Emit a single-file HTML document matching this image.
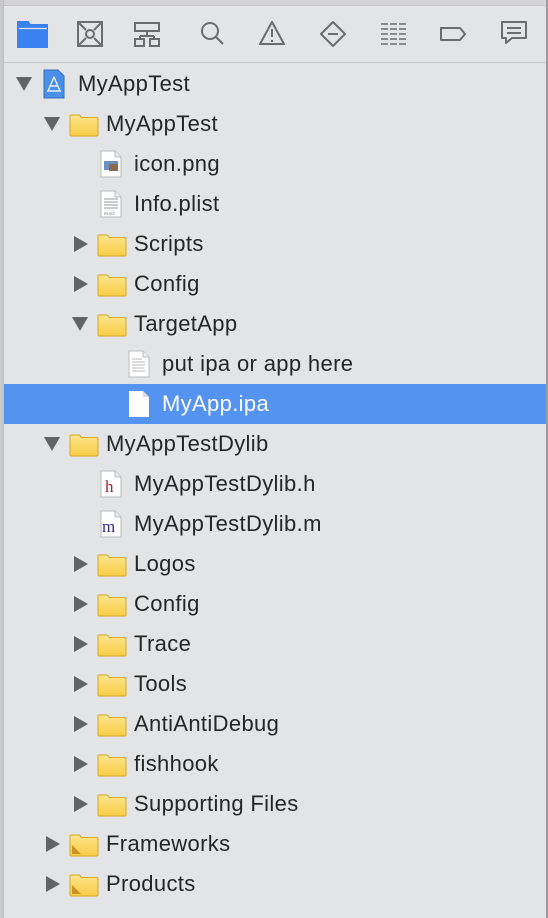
<!DOCTYPE html>
<html><head><style>
body{margin:0;width:548px;height:918px;background:#e3e4e6;position:relative;overflow:hidden;font-family:"Liberation Sans",sans-serif;}
.abs{position:absolute}
.t{position:absolute;top:8px;font-size:22px;letter-spacing:0.35px;color:#262626;line-height:26px;white-space:nowrap}
</style></head><body>
<div class="abs" style="left:0;top:0;width:548px;height:5px;background:#d4d4d6;border-bottom:1px solid #c4c4c6"></div>
<div class="abs" style="left:0;top:0;width:3px;height:918px;background:#c9c9cb"></div>
<div class="abs" style="left:3px;top:0;width:1px;height:918px;background:#bdbdbf"></div>
<div class="abs" style="right:0;top:0;width:2px;height:918px;background:#9c9c9e"></div>
<div class="abs" style="left:4px;top:62px;width:542px;height:1px;background:#c8c8ca"></div>
<!-- toolbar -->
<svg class="abs" style="left:0;top:0" width="548" height="62" viewBox="0 0 548 62" fill="none" stroke="#6c6c6c" stroke-width="2">
<path d="M18 22h10l2 3h17v22H18z" fill="#3b82f0" stroke="#3b82f0"/>
<path d="M19 28.5h28" stroke="#e3e4e6" stroke-width="1.2"/>
<rect x="78" y="22" width="24" height="24"/><path d="M78 22l8 8M102 22l-8 8M78 46l8-8M102 46l-8-8"/><circle cx="90" cy="34" r="4"/>
<rect x="135" y="23" width="24" height="8"/><path d="M147 31v5M140 36h14M140 36v3M154 36v3"/><rect x="135" y="39" width="9" height="7"/><rect x="150" y="39" width="9" height="7"/>
<circle cx="210" cy="31" r="8"/><path d="M216 37l7 7"/>
<path d="M272 22l12 22h-24z" stroke-linejoin="round"/><path d="M272 29v8M272 40v2"/>
<path d="M333 22l12 12-12 12-12-12z" stroke-linejoin="round"/><path d="M328 34h10"/>
<path d="M381 24h26M381 29h26M381 34h26M381 39h26M381 44h26" stroke-width="1.6" stroke-dasharray="7 2"/>
<path d="M441 28h19l5 6-5 6h-19z" stroke-linejoin="round"/>
<path d="M502 22h24v16h-14l-6 5v-5h-4z" stroke-linejoin="round"/><path d="M507 28h14M507 33h14"/>
</svg>
<div class="abs" style="left:4px;top:384px;width:542px;height:40px;background:#5593f0"></div>
<svg width="0" height="0" style="position:absolute">
<defs>
<linearGradient id="fg" x1="0" y1="0" x2="0" y2="1"><stop offset="0" stop-color="#fde58a"/><stop offset="1" stop-color="#f8cc45"/></linearGradient>
<symbol id="fold" viewBox="0 0 30 24"><path d="M1 3.5a1.5 1.5 0 0 1 1.5-1.5h8l2 2.5h15a1.5 1.5 0 0 1 1.5 1.5v15.5a1.5 1.5 0 0 1-1.5 1.5h-25a1.5 1.5 0 0 1-1.5-1.5z" fill="url(#fg)" stroke="#d8a92a"/></symbol>
<symbol id="foldp" viewBox="0 0 30 24"><use href="#fold"/><path d="M3 21V12l9 9z" fill="#c99425"/></symbol>
<symbol id="file" viewBox="0 0 22 28"><path d="M1 1h14l6 6v20H1z" fill="#fff" stroke="#bbb"/><path d="M15 1v6h6" fill="#eee" stroke="#bbb"/></symbol>
<symbol id="down" viewBox="0 0 16 14"><path d="M0 0h16L8 14z" fill="#636363"/></symbol>
<symbol id="right" viewBox="0 0 14 16"><path d="M0 0l14 8L0 16z" fill="#636363"/></symbol>
</defs></svg>

<svg class="abs" style="left:16px;top:77px" width="16" height="14"><use href="#down"/></svg>
<svg class="abs" style="left:43px;top:69px" width="22" height="30" viewBox="0 0 22 30"><path d="M1 1h14l6 6v22H1z" fill="#4a90e8" stroke="#2f6fc4"/><path d="M11 8l-6 14M11 8l6 14M7 17h8M4 22h14" stroke="#fff" stroke-width="1.2" fill="none"/></svg>
<div class="t" style="left:78px;top:71px">MyAppTest</div>
<svg class="abs" style="left:44px;top:117px" width="16" height="14"><use href="#down"/></svg>
<svg class="abs" style="left:69px;top:113px" width="30" height="24"><use href="#fold"/></svg>
<div class="t" style="left:106px;top:111px">MyAppTest</div>
<svg class="abs" style="left:100px;top:150px" width="22" height="28"><use href="#file"/><rect x="4" y="11" width="14" height="9" fill="#6a8fc0"/><rect x="9" y="14" width="9" height="7" fill="#8a6a4a"/></svg>
<div class="t" style="left:134px;top:151px">icon.png</div>
<svg class="abs" style="left:100px;top:190px" width="22" height="28"><use href="#file"/><path d="M4 9h14M4 12h14M4 15h14M4 18h14" stroke="#999"/><text x="4" y="25" font-size="4" fill="#666" font-family="Liberation Sans">PLIST</text></svg>
<div class="t" style="left:134px;top:191px">Info.plist</div>
<svg class="abs" style="left:74px;top:236px" width="14" height="16"><use href="#right"/></svg>
<svg class="abs" style="left:97px;top:233px" width="30" height="24"><use href="#fold"/></svg>
<div class="t" style="left:134px;top:231px">Scripts</div>
<svg class="abs" style="left:74px;top:276px" width="14" height="16"><use href="#right"/></svg>
<svg class="abs" style="left:97px;top:273px" width="30" height="24"><use href="#fold"/></svg>
<div class="t" style="left:134px;top:271px">Config</div>
<svg class="abs" style="left:72px;top:317px" width="16" height="14"><use href="#down"/></svg>
<svg class="abs" style="left:97px;top:313px" width="30" height="24"><use href="#fold"/></svg>
<div class="t" style="left:134px;top:311px">TargetApp</div>
<svg class="abs" style="left:128px;top:350px" width="22" height="28"><use href="#file"/><path d="M4 9h10M4 12h13M4 15h13M4 18h12M4 21h13" stroke="#bbb"/></svg>
<div class="t" style="left:162px;top:351px">put ipa or app here</div>
<svg class="abs" style="left:128px;top:390px" width="22" height="28" viewBox="0 0 22 28"><path d="M1 1h14l6 6v20H1z" fill="#fff"/><path d="M15 1v6h6" fill="#ddd"/></svg>
<div class="t" style="left:162px;top:391px;color:#fff">MyApp.ipa</div>
<svg class="abs" style="left:44px;top:437px" width="16" height="14"><use href="#down"/></svg>
<svg class="abs" style="left:69px;top:433px" width="30" height="24"><use href="#fold"/></svg>
<div class="t" style="left:106px;top:431px">MyAppTestDylib</div>
<svg class="abs" style="left:100px;top:470px" width="22" height="28"><use href="#file"/><text x="5" y="22" font-size="17" fill="#a0242c" font-family="Liberation Serif">h</text></svg>
<div class="t" style="left:134px;top:471px">MyAppTestDylib.h</div>
<svg class="abs" style="left:100px;top:510px" width="22" height="28"><use href="#file"/><text x="2" y="22" font-size="17" fill="#3a2a8a" font-family="Liberation Serif">m</text></svg>
<div class="t" style="left:134px;top:511px">MyAppTestDylib.m</div>
<svg class="abs" style="left:74px;top:556px" width="14" height="16"><use href="#right"/></svg>
<svg class="abs" style="left:97px;top:553px" width="30" height="24"><use href="#fold"/></svg>
<div class="t" style="left:134px;top:551px">Logos</div>
<svg class="abs" style="left:74px;top:596px" width="14" height="16"><use href="#right"/></svg>
<svg class="abs" style="left:97px;top:593px" width="30" height="24"><use href="#fold"/></svg>
<div class="t" style="left:134px;top:591px">Config</div>
<svg class="abs" style="left:74px;top:636px" width="14" height="16"><use href="#right"/></svg>
<svg class="abs" style="left:97px;top:633px" width="30" height="24"><use href="#fold"/></svg>
<div class="t" style="left:134px;top:631px">Trace</div>
<svg class="abs" style="left:74px;top:676px" width="14" height="16"><use href="#right"/></svg>
<svg class="abs" style="left:97px;top:673px" width="30" height="24"><use href="#fold"/></svg>
<div class="t" style="left:134px;top:671px">Tools</div>
<svg class="abs" style="left:74px;top:716px" width="14" height="16"><use href="#right"/></svg>
<svg class="abs" style="left:97px;top:713px" width="30" height="24"><use href="#fold"/></svg>
<div class="t" style="left:134px;top:711px">AntiAntiDebug</div>
<svg class="abs" style="left:74px;top:756px" width="14" height="16"><use href="#right"/></svg>
<svg class="abs" style="left:97px;top:753px" width="30" height="24"><use href="#fold"/></svg>
<div class="t" style="left:134px;top:751px">fishhook</div>
<svg class="abs" style="left:74px;top:796px" width="14" height="16"><use href="#right"/></svg>
<svg class="abs" style="left:97px;top:793px" width="30" height="24"><use href="#fold"/></svg>
<div class="t" style="left:134px;top:791px">Supporting Files</div>
<svg class="abs" style="left:46px;top:836px" width="14" height="16"><use href="#right"/></svg>
<svg class="abs" style="left:69px;top:833px" width="30" height="24"><use href="#foldp"/></svg>
<div class="t" style="left:106px;top:831px">Frameworks</div>
<svg class="abs" style="left:46px;top:876px" width="14" height="16"><use href="#right"/></svg>
<svg class="abs" style="left:69px;top:873px" width="30" height="24"><use href="#foldp"/></svg>
<div class="t" style="left:106px;top:871px">Products</div>
</body></html>
